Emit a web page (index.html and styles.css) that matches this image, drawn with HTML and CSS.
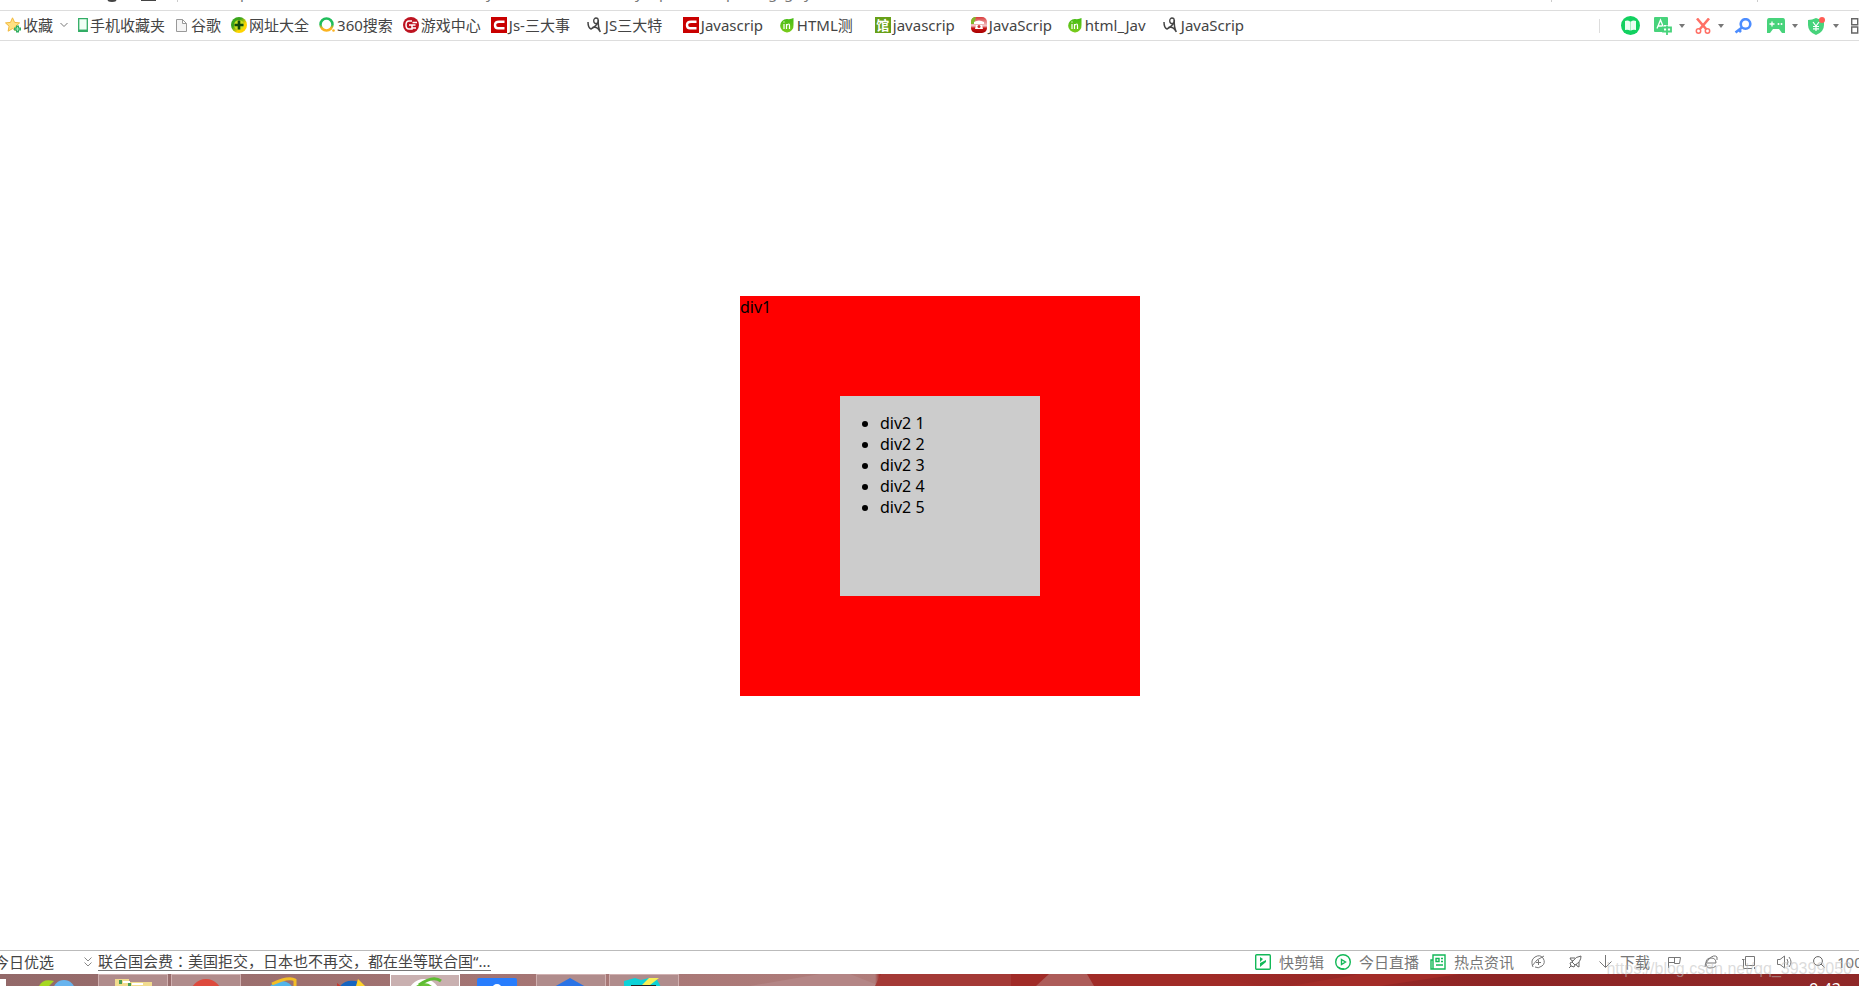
FILE: index.html
```html
<!DOCTYPE html>
<html lang="zh-CN">
<head>
<meta charset="utf-8">
<title>div1</title>
<link rel="stylesheet" href="styles.css">
</head>
<body>
<svg class="defs" aria-hidden="true">
  <defs>
    <linearGradient id="gy" x1="0" x2="1" y1="0" y2="1"><stop offset=".35" stop-color="#3aa51c"/><stop offset=".65" stop-color="#ffd400"/></linearGradient>
    <linearGradient id="ring" x1="0" x2="0" y1="0" y2="1"><stop offset=".5" stop-color="#20bd5b"/><stop offset=".8" stop-color="#fbb320"/></linearGradient>
    <linearGradient id="leaf" x1="0" x2="0" y1="0" y2="1"><stop offset="0" stop-color="#45bb15"/><stop offset="1" stop-color="#7acc1c"/></linearGradient>
    <linearGradient id="rg" x1="0" x2="0" y1="0" y2="1"><stop offset="0" stop-color="#d83a3a"/><stop offset=".55" stop-color="#f4c8c8"/><stop offset=".7" stop-color="#c61212"/><stop offset="1" stop-color="#a80000"/></linearGradient>
    <symbol id="i-c" viewBox="0 0 16 16"><path fill="#c90000" d="M0 0h16v16H0z"/><path d="M13.500 4.700H8Q4 4.700 4 8t3 3.300h6.500" fill="none" stroke="#fff" stroke-width="2.400"/></symbol>
    <symbol id="i-ren" viewBox="0 0 16 16"><path d="M1 5q0 6 3 7q4-2 7-6" fill="none" stroke="#444" stroke-width="1.500"/><ellipse cx="9" cy="3.800" rx="2.300" ry="2.800" fill="none" stroke="#444" stroke-width="1.300"/><path d="M11.300 3q-.5 7 2 12M5.500 10.500q5-1.500 7.500 4" fill="none" stroke="#444" stroke-width="1.500"/></symbol>
    <symbol id="i-in" viewBox="0 0 16 16"><path d="M14.500 1v7A6.700 6.700 0 1 1 8 2q4 .5 6.500-1z" fill="url(#leaf)"/><path d="M5 7v5M5 4.500v1M7.500 12V7M7.500 8.500q3-3 3 0V12" fill="none" stroke="#fff" stroke-width="1.200"/></symbol>
    <symbol id="i-caret" viewBox="0 0 6 4"><path d="M0 0h6L3 4z" fill="#777"/></symbol>
  </defs>
</svg>

<header class="address">
  <svg class="address-line" width="1859" height="10" aria-hidden="true">
    <path d="M108 0q4 2 8 0M141 0h15" stroke="#444" stroke-width="2" fill="none"/>
    <path d="M177.500 0v2M1551.500 0v2M1757.500 0v2" stroke="#ccc"/>
    <g class="address-text"><text x="240" y="-2">p</text><text x="486" y="-2">y</text><text x="635" y="-2">y</text><text x="659" y="-2">p</text><text x="726" y="-2">p</text><text x="768" y="-2">g</text><text x="784" y="-2">g</text><text x="804" y="-2">y</text></g>
  </svg>
</header>

<nav class="bookmarks">
  <div class="links">
    <button class="mark"><svg width="16" height="16" viewBox="0 0 16 16"><path d="M7.500.8l2.100 4.600 5 .5-3.800 3.300 1.100 5-4.400-2.600-4.400 2.600 1-5L.5 5.900l5-.5z" fill="#ffe082" stroke="#f1b83c"/><path d="M12.500 8.500v7M9 12h7" stroke="#2fae63" stroke-width="3"/><path d="M12.500 10v4M10.500 12h4" stroke="#9be3b8"/></svg>收藏<svg class="chevron" width="8" height="6" viewBox="0 0 8 6"><path d="M.5 1L4 4.500 7.500 1" fill="none" stroke="#777"/></svg></button>
    <a class="mark" href="#"><svg width="10" height="14" viewBox="0 0 10 14"><path d="M.7.700h8.600v12.600H.7z" fill="#effff5" stroke="#32ad65" stroke-width="1.300"/><path d="M1 12.300h8" stroke="#32ad65" stroke-width="1.500"/></svg>手机收藏夹</a>
    <a class="mark wide" href="#"><svg width="12" height="13" viewBox="-1 0 12 13"><path d="M.5.500h6l4 4v8H.5zM6.500.500v4h4" fill="#f5f5f5" stroke="#999"/></svg>谷歌</a>
    <a class="mark" href="#"><svg width="16" height="16" viewBox="0 0 16 16"><circle cx="8" cy="8" r="8" fill="url(#gy)"/><circle cx="8" cy="8" r="5" fill="#c8e020"/><path d="M8 3.500v9M3.500 8h9" stroke="#134b0d" stroke-width="2.600"/></svg>网址大全</a>
    <a class="mark" href="#"><svg width="16" height="16" viewBox="0 0 16 16"><circle cx="7.500" cy="7.500" r="6" fill="none" stroke="url(#ring)" stroke-width="2.500"/><circle cx="14.500" cy="13.500" r="1.300" fill="#fbb320"/></svg>360搜索</a>
    <a class="mark" href="#"><svg width="16" height="16" viewBox="0 0 16 16"><circle cx="8" cy="8" r="8" fill="#bd1320"/><path d="M9 4H6Q3 4 3 8t3 4h3V8H6M14 5.500H9.500M12.500 8H9.500M9.500 11H13" fill="none" stroke="#fff" stroke-width="1.500"/></svg>游戏中心</a>
    <a class="mark clipped" href="#"><svg width="16" height="16"><use href="#i-c"/></svg>Js-三大事</a>
    <a class="mark clipped" href="#"><svg width="16" height="16"><use href="#i-ren"/></svg>JS三大特</a>
    <a class="mark clipped" href="#"><svg width="16" height="16"><use href="#i-c"/></svg>Javascrip</a>
    <a class="mark clipped" href="#"><svg width="16" height="16"><use href="#i-in"/></svg>HTML测</a>
    <a class="mark clipped" href="#"><span class="tile">馆</span>javascrip</a>
    <a class="mark clipped" href="#"><svg width="16" height="16" viewBox="0 0 16 16"><rect width="16" height="16" rx="5" fill="url(#rg)"/><path d="M0 5q0-5 5-5L3 7H0z" fill="#83b82b"/><path d="M3 5q5-3 10 0v2H3zM4 12l1-4h6l1 4z" fill="#fff"/><circle cx="8" cy="9.500" r="1.500" fill="#c33"/></svg>JavaScrip</a>
    <a class="mark clipped" href="#"><svg width="16" height="16"><use href="#i-in"/></svg>html_Jav</a>
    <a class="mark clipped" href="#"><svg width="16" height="16"><use href="#i-ren"/></svg>JavaScrip</a>
  </div>
  <div class="tools">
    <span class="rule"></span>
    <button class="tool book" aria-label="阅读"><svg width="19" height="19" viewBox="0 0 19 19"><circle cx="9.500" cy="9.500" r="9.500" fill="#12d160"/><path d="M4 5q3-1 5 .5v9q-2-1.300-5-.5zM15 5q-3-1-5 .5v9q2-1.300 5-.5z" fill="#eafff2"/><path d="M9.500 5.500v9" stroke="#a5eec2"/></svg></button>
    <button class="tool" aria-label="翻译"><svg width="18" height="18" viewBox="0 0 18 18"><path d="M1 0h12q1 0 1 1v7h-4v7H1q-1 0-1-1V1q0-1 1-1z" fill="#47d37b"/><path d="M3 11.500L6.500 3 10 11.500M4.200 9h4.600" fill="none" stroke="#fff" stroke-width="1.300"/><path d="M9 10.500h8v4H9zM13 8.500V18" fill="none" stroke="#47d37b" stroke-width="1.800"/></svg><svg width="6" height="4"><use href="#i-caret"/></svg></button>
    <button class="tool" aria-label="截图"><svg width="16" height="16" viewBox="0 0 16 16"><path d="M2 .5l9.500 11M14 .5l-9.500 11" stroke="#ff7066" stroke-width="2.600"/><g fill="none" stroke="#ff7066" stroke-width="1.500"><circle cx="3.500" cy="13" r="2.200"/><circle cx="12.500" cy="13" r="2.200"/></g></svg><svg width="6" height="4"><use href="#i-caret"/></svg></button>
    <button class="tool key" aria-label="密码"><svg width="18" height="16" viewBox="0 0 18 16"><circle cx="11.500" cy="6" r="4.800" fill="none" stroke="#4c8dff" stroke-width="2.600"/><path d="M8 9.500l-6.500 5M5 12l2 2" stroke="#4c8dff" stroke-width="2.600"/></svg></button>
    <button class="tool" aria-label="游戏"><svg width="18" height="15" viewBox="0 0 18 15"><path d="M2 0h14q2 0 2 3v12h-3l-3-4H6l-3 4H0V3q0-3 2-3z" fill="#47d37b"/><path d="M5 3.500v5M2.500 6h5" stroke="#fff" stroke-width="1.300"/><circle cx="11.500" cy="6" r="1" fill="#fff"/><circle cx="14.500" cy="6" r="1" fill="#fff"/></svg><svg width="6" height="4"><use href="#i-caret"/></svg></button>
    <button class="tool" aria-label="购物"><svg width="18" height="18" viewBox="0 0 18 18"><path d="M8 1q4 2 8 2v5q0 7-8 10Q0 15 0 8V3q4 0 8-2z" fill="#47d37b"/><path d="M5 5l3 4 3-4M8 9v5M5 9.500h6M5 11.800h6" fill="none" stroke="#fff" stroke-width="1.200"/><circle cx="14" cy="3" r="3" fill="#ff5c54"/></svg><svg width="6" height="4"><use href="#i-caret"/></svg></button>
    <button class="tool more" aria-label="更多"><svg width="8" height="16" viewBox="0 0 8 16"><path d="M.7.700h6v6h-6zM.7 9h6v6h-6z" fill="none" stroke="#666" stroke-width="1.400"/></svg></button>
  </div>
</nav>

<main class="page">
  <div class="div1">div1
    <div class="div2">
      <ul>
        <li>div2 1</li>
        <li>div2 2</li>
        <li>div2 3</li>
        <li>div2 4</li>
        <li>div2 5</li>
      </ul>
    </div>
  </div>
</main>

<footer class="status">
  <div class="news">
    <span class="pick">今日优选</span>
    <svg width="8" height="10" viewBox="0 0 8 10"><path d="M.5.500L4 4 7.500.500M.5 5.500L4 9l3.500-3.500" fill="none" stroke="#888"/></svg>
    <a class="headline" href="#">联合国会费<span lang="zh-TW" class="colon">：</span>美国拒交，日本也不再交，都在坐等联合国“...</a>
  </div>
  <div class="actions">
    <button class="act"><svg width="16" height="16" viewBox="0 0 16 16"><rect x=".7" y=".7" width="14.600" height="14.600" rx="1" fill="none" stroke="#13b858" stroke-width="1.400"/><path d="M5 3l3 2-3 3zM5 13V9l6-3v2z" fill="#13b858"/></svg>快剪辑</button>
    <button class="act"><svg width="16" height="16" viewBox="0 0 16 16"><circle cx="8" cy="8" r="7.300" fill="none" stroke="#13b858" stroke-width="1.400"/><path d="M6.500 5.500L10.500 8l-4 2.500zM3 13q3 2 6 2" fill="none" stroke="#13b858" stroke-width="1.400"/></svg>今日直播</button>
    <button class="act"><svg width="16" height="16" viewBox="0 0 16 16"><path d="M3 1h12v14H1V6h2zM3 6v9M6 4.500h3v3H6zM11 4.500h2M11 7.500h2M6 11h7" fill="none" stroke="#13b858" stroke-width="1.400"/></svg>热点资讯</button>
    <button class="act icon" aria-label="加速"><svg width="14" height="14" viewBox="0 0 14 14"><path d="M2 12Q-1 5 4 2t8 1q3 5-1 8t-7 1M1 11Q5 4 13 1M7.500 5v5M5 7.500h5" fill="none" stroke="#777"/></svg></button>
    <button class="act icon" aria-label="火箭"><svg width="14" height="14" viewBox="0 0 14 14"><path d="M13 1Q8 1 4 7l3 3q6-3 6-9zM7 3H2l1 2 2 1M11 7v5l-2-1-1-2M4 7l-2 1 1 3 3 1 1-2M3 11l-2 2" fill="none" stroke="#666"/></svg></button>
    <button class="act"><svg width="13" height="13" viewBox="0 0 13 13"><path d="M6.500 0v12M.5 6.500l6 6 6-6" fill="none" stroke="#777"/></svg>下载</button>
    <button class="act icon" aria-label="旗标"><svg width="14" height="14" viewBox="0 0 14 14"><path d="M1.500 13V2.500h12L12.500 8.500h-5v-6M2 7.500h5.500" fill="none" stroke="#777"/></svg></button>
    <button class="act icon" aria-label="内核"><svg width="14" height="14" viewBox="0 0 14 14"><path d="M3 8h9q0-5-5-5t-5 5 4 5 6-2M1 12Q0 9 5 4t8-2v3" fill="none" stroke="#777"/></svg></button>
    <button class="act icon" aria-label="窗口"><svg width="14" height="14" viewBox="0 0 14 14"><path d="M4.500 1.500h9v9h-9zM1 4.500h2.500M2.500 5v8.500H11M13.500 12v2" fill="none" stroke="#777"/></svg></button>
    <button class="act icon" aria-label="声音"><svg width="16" height="14" viewBox="0 0 16 14"><path d="M.5 4.500H3L7.500 1v12L3 9.500H.5zM10 4q2 3 0 6M12 2q4 5 0 10" fill="none" stroke="#777"/></svg></button>
    <button class="act zoom"><svg width="12" height="12" viewBox="0 0 12 12"><circle cx="5" cy="5" r="4.400" fill="none" stroke="#666"/><path d="M8 8l3.500 3.500" stroke="#666"/></svg>100</button>
  </div>
</footer>

<div class="taskbar">
  <svg class="wallpaper" width="1859" height="12" aria-hidden="true">
    <path d="M0 5h6v7H0z" fill="#fff"/>
    <path d="M750 12L820 0h30l30 12z" fill="#b48686"/>
    <path d="M875 12l6-12h130v12z" fill="#a43a36"/>
    <path d="M1011 0h190l60 12h-250z" fill="#a02b27"/>
    <path d="M1036 12l13-12h38l7 12z" fill="#ad5c59"/>
    <path d="M1290 12l70-12h100l-80 12z" fill="#a32c28"/>
  </svg>
  <div class="apps">
    <button class="app" aria-label="应用 1"><svg width="70" height="12"><path d="M14 12Q18 4 29 7l-5 5z" fill="#a5d821"/><circle cx="39" cy="17" r="11" fill="#68b4ee"/></svg></button>
    <button class="app open" aria-label="文件夹"><svg width="68" height="12"><path d="M16 12V4h14v3h23v5z" fill="#f2dc8e"/><path d="M20 5h3v4h-3zM29 8h3v4h-3z" fill="#4b9c52"/><path d="M24 6h7v2h-7zM33 8h11v2H33z" fill="#fff"/></svg></button>
    <button class="app open" aria-label="录制"><svg width="68" height="12"><circle cx="34" cy="20" r="16" fill="#dd4a3d"/></svg></button>
    <button class="app" aria-label="Internet Explorer"><svg width="70" height="12"><circle cx="37" cy="21" r="14" fill="#52b5ea"/><path d="M28 10Q45 2 51 6v6" fill="none" stroke="#f3bd26" stroke-width="3"/></svg></button>
    <button class="app" aria-label="应用 5"><svg width="70" height="12"><path d="M23 12Q30 4 42 8l3 4z" fill="#1665c0"/><path d="M41 5l7 7h-9z" fill="#ffd32a"/><path d="M20 9l4 3h-4z" fill="#c9382f"/></svg></button>
    <button class="app open active" aria-label="360 浏览器"><svg width="68" height="12"><circle cx="33" cy="20" r="16" fill="#fff"/><circle cx="33" cy="20" r="12" fill="#6ac33a"/><path d="M28 10Q42 0 50 6" fill="none" stroke="#5ebc32" stroke-width="3"/></svg></button>
    <button class="app" aria-label="应用 7"><svg width="70" height="12"><rect x="14" y="4" width="40" height="16" rx="2" fill="#287dfd"/><circle cx="34" cy="15" r="5" fill="#fff"/></svg></button>
    <button class="app open" aria-label="应用 8"><svg width="68" height="12"><path d="M17 12L33 3l16 9z" fill="#2a73e5"/></svg></button>
    <button class="app open" aria-label="WebStorm"><svg width="68" height="12"><path d="M14 6l11-3 6 2 8-2 7 0 5 9H14z" fill="#0cd2d8"/><path d="M39 3h10l-9 7h-8z" fill="#f8ef55"/><path d="M21 10h25v2H21z" fill="#222"/></svg></button>
  </div>
  <time class="clock">9:43</time>
</div>
<div class="watermark">https://blog.csdn.net/qq_39399050</div>
</body>
</html>
```
FILE: styles.css
```css
* { box-sizing: border-box; }
body {
  margin: 0;
  height: 100vh;
  display: flex;
  flex-direction: column;
  overflow: hidden;
  position: relative;
  background: #fff;
  color: #444;
  font: 15px/20px "Noto Sans", "Noto Sans CJK SC", sans-serif;
}
button {
  border: 0;
  padding: 0;
  background: none;
  color: inherit;
  font: inherit;
}
a { color: inherit; text-decoration: none; }
svg { display: block; flex: none; }
.defs { position: absolute; width: 0; height: 0; }

.address { height: 11px; flex: none; border-bottom: 1px solid #ddd; overflow: hidden; }
.address-text { font-size: 15px; fill: #777; }

.bookmarks {
  height: 30px;
  flex: none;
  display: flex;
  align-items: center;
  justify-content: space-between;
  padding-left: 5px;
  border-bottom: 1px solid #ddd;
}
.links { display: flex; gap: 10px; padding-bottom: 1px; }
.mark {
  display: flex;
  align-items: center;
  gap: 2px;
  white-space: nowrap;
}
.mark.wide { gap: 4px; }
.clipped { width: 86px; }
.chevron { margin: 0 0 0 5px; }
.tile {
  width: 16px;
  height: 16px;
  background: #67a018;
  color: #fff;
  font-size: 13px;
  font-weight: 700;
  line-height: 16px;
  text-align: center;
}
.tools { display: flex; align-items: center; gap: 10px; }
.tool { display: flex; align-items: center; gap: 7px; }
.rule { width: 1px; height: 14px; background: #ddd; }
.book { margin: 0 4px 0 11px; }
.key { margin-right: 5px; }
.more { margin-left: 2px; }

.page {
  flex: 1;
  display: flex;
  align-items: center;
  justify-content: center;
  padding-left: 21px;
  color: #000;
  font-size: 16px;
  line-height: 21px;
}
.div1 { width: 400px; height: 400px; padding-top: 1px; background: #f00; }
.div2 {
  width: 200px;
  height: 200px;
  margin: 78px auto 0;
  padding-top: 17px;
  background: #ccc;
}
.div2 ul { margin: 0; padding-left: 40px; }

.status {
  height: 24px;
  flex: none;
  display: flex;
  align-items: center;
  justify-content: space-between;
  padding-bottom: 2px;
  border-top: 1px solid #bbb;
}
.news, .actions, .act { display: flex; align-items: center; white-space: nowrap; }
.pick { margin: 0 30px 0 -6px; }
.headline { margin-left: 6px; border-bottom: 1px solid #777; line-height: 18px; }
.colon { font-family: "Noto Sans CJK TC", sans-serif; }
.actions { color: #777; gap: 11px; }
.act { gap: 8px; }
.icon { width: 26px; justify-content: center; }
.zoom { width: 46px; margin-left: 4px; gap: 12px; overflow: hidden; }

.taskbar {
  height: 12px;
  flex: none;
  position: relative;
  display: flex;
  justify-content: space-between;
  overflow: hidden;
  background: linear-gradient(90deg, #936969 0, #b07d7b 875px, #a02b27 880px, #a02b27 1200px, #8d2525 1500px, #8f2828 100%);
}
.wallpaper { position: absolute; left: 0; top: 0; }
.apps { position: relative; display: flex; gap: 3px; padding-left: 25px; }
.app { width: 70px; height: 12px; overflow: hidden; }
.open {
  height: 14px;
  border: 1px solid #d0b0b0;
  background: #b08c8c;
}
.active { border-color: #fff; background: #c9b0b0; }
.clock {
  position: relative;
  padding: 5px 18px 0 0;
  color: #fff;
  font-size: 16px;
}
.watermark {
  position: absolute;
  right: 7px;
  bottom: 7px;
  color: rgba(190, 190, 190, .55);
  font: 16px/20px "Liberation Sans", sans-serif;
}
```
